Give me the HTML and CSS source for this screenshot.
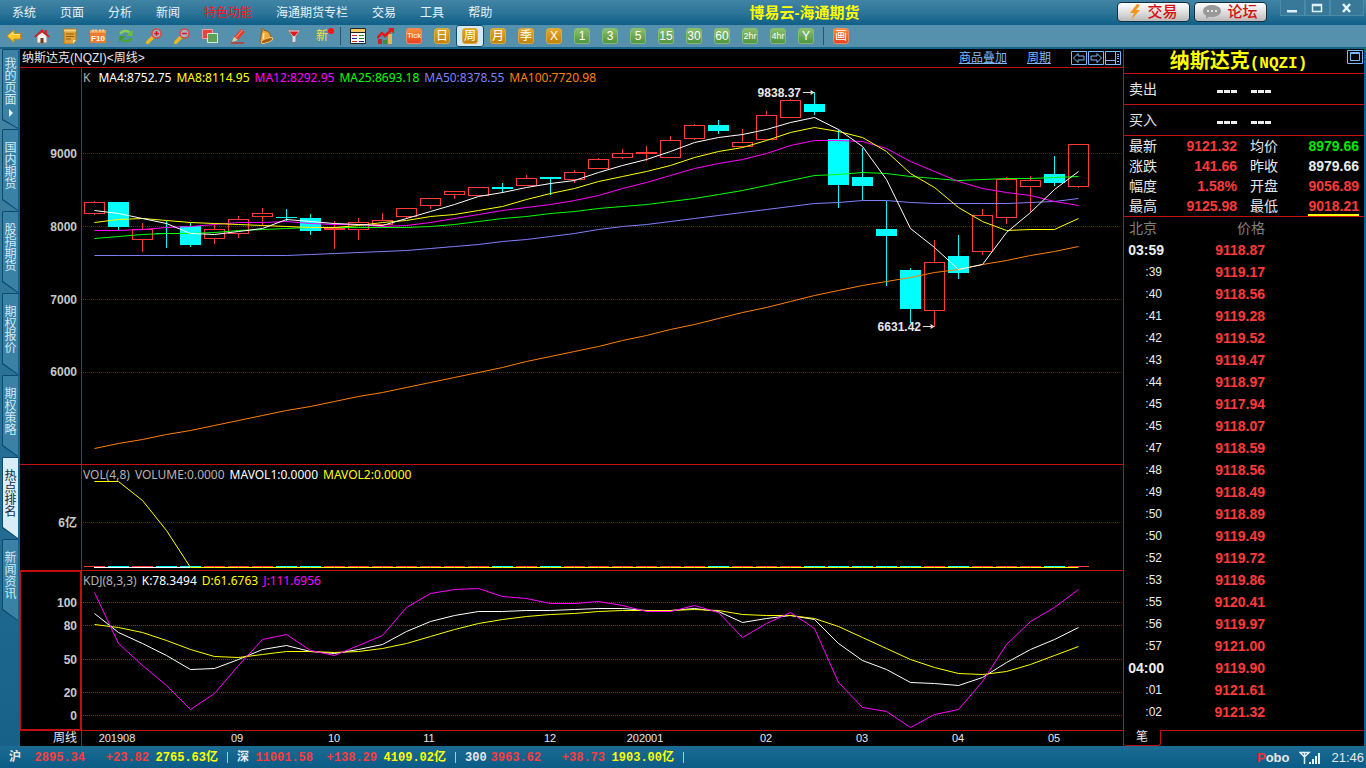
FILE: index.html
```html
<!DOCTYPE html>
<html lang="zh-CN">
<head>
<meta charset="utf-8">
<title>博易云-海通期货</title>
<link rel="stylesheet" href="styles.css">
</head>
<body>
<div class="app">
  <header class="titlebar">
    <nav class="menu">
      <a href="#">系统</a><a href="#">页面</a><a href="#">分析</a><a href="#">新闻</a><a href="#" class="hot">特色功能</a><a href="#">海通期货专栏</a><a href="#">交易</a><a href="#">工具</a><a href="#">帮助</a>
    </nav>
    <h1 class="app-title">博易云-海通期货</h1>
    <div class="quick">
      <button class="pill"><svg width="12" height="16" viewBox="0 0 12 16"><path d="M8 0 1 9h4L2 16l9-10H7l4-5z" fill="#f7941d"/></svg>交易</button>
      <button class="pill"><svg width="18" height="14" viewBox="0 0 18 14"><path d="M9 0c5 0 9 2.400 9 6s-4 6-9 6c-1 0-2 0-3-.3L3 14v-3.500C1 9.500 0 8 0 6c0-3.600 4-6 9-6z" fill="#999"/><circle cx="5" cy="6" r="1" fill="#fff"/><circle cx="9" cy="6" r="1" fill="#fff"/><circle cx="13" cy="6" r="1" fill="#fff"/></svg>论坛</button>
    </div>
    <div class="window-controls">
      <button aria-label="最小化"><svg width="12" height="10" viewBox="0 0 12 10"><path d="M1 7h10v2.500H1z" fill="#dff1fa"/></svg></button>
      <button aria-label="最大化"><svg width="12" height="10" viewBox="0 0 12 10"><path d="M1.500 1.500h9v7h-9zM1.500 2.500h9" fill="none" stroke="#dff1fa" stroke-width="1.500"/></svg></button>
      <button aria-label="关闭" class="close"><svg width="12" height="10" viewBox="0 0 12 10"><path d="M2 1l7 8M9 1 2 9" fill="none" stroke="#dff1fa" stroke-width="2.500"/></svg></button>
    </div>
  </header>

  <div class="toolbar">
    <button aria-label="后退"><svg width="16" height="16" viewBox="0 0 16 16"><path d="M1 8 8 2v3.500h6.500v5.500H8v3.500z" fill="#ffc72c" stroke="#c98d12"/><path d="M3.500 7.500 7 4.500v2h6.500" fill="none" stroke="#ffe88c"/></svg></button>
    <button aria-label="首页"><svg width="16" height="16" viewBox="0 0 16 16"><path d="M3 8v7h10V8L8 3z" fill="#eee" stroke="#888"/><path d="M11 2h2v4h-2z" fill="#b33"/><path d="M0 8.500 8 1l8 7.500-1.500 1L8 4.500 1.500 9.500z" fill="#c9262b"/><path d="M6.500 10h3v5h-3z" fill="#6b3a1c"/></svg></button>
    <button aria-label="资讯"><svg width="16" height="16" viewBox="0 0 16 16"><path d="M2 1h12v11l-3 4H2z" fill="#e3a33a" stroke="#b57718"/><path d="M2 1.500h12v2H2z" fill="#f7d27c"/><path d="M4 6h8M4 8.500h8M4 11h5" stroke="#8f5d12"/><path d="M11 16v-4h3z" fill="#ffe4a0"/></svg></button>
    <button aria-label="F10"><svg width="18" height="16" viewBox="0 0 18 16"><rect x="1" y="2" width="16" height="13" rx="1" fill="#ee7a2c"/><path d="M1 2h16v3H1z" fill="#f5a14d"/><path d="M4 1v3M7 1v3M11 1v3M14 1v3" stroke="#f3e3cf"/><text x="9" y="13" class="f10">F10</text></svg></button>
    <button aria-label="刷新"><svg width="16" height="16" viewBox="0 0 16 16"><path d="M2.500 6C4 2.500 9 2 11.500 4.500" fill="none" stroke="#8ad04a" stroke-width="2.500"/><path d="M14.500 2v6H8.500z" fill="#6cbf35"/><path d="M13.500 10C12 13.500 7 14 4.500 11.500" fill="none" stroke="#4aa62f" stroke-width="2.500"/><path d="M1.500 14V8h6z" fill="#3f9a2b"/></svg></button>
    <button aria-label="放大"><svg width="16" height="16" viewBox="0 0 16 16"><path d="m1.500 14.500 5-5" stroke="#f0b51c" stroke-width="3.500" stroke-linecap="round"/><circle cx="10.500" cy="5.500" r="4.500" fill="#eed3d3" fill-opacity=".5" stroke="#dc4a3c" stroke-width="1.500"/><path d="M8 5.500h5M10.500 3v5" stroke="#cf1e1e" stroke-width="1.500"/></svg></button>
    <button aria-label="缩小"><svg width="16" height="16" viewBox="0 0 16 16"><path d="m1.500 14.500 5-5" stroke="#f0b51c" stroke-width="3.500" stroke-linecap="round"/><circle cx="10.500" cy="5.500" r="4.500" fill="#eed3d3" fill-opacity=".5" stroke="#dc4a3c" stroke-width="1.500"/><path d="M8 5.500h5" stroke="#cf1e1e" stroke-width="1.500"/></svg></button>
    <button aria-label="叠加"><svg width="17" height="16" viewBox="0 0 17 16"><path d="M.5 1.500h10v9H.5z" fill="#e0473f" stroke="#f2a09b"/><path d="M5.500 5.500h10v9h-10z" fill="#5da257" stroke="#d8ead5"/></svg></button>
    <button aria-label="画笔"><svg width="16" height="16" viewBox="0 0 16 16"><path d="M1 15h13" stroke="#c43628" stroke-width="1.500"/><path d="M11 1l4 3-7 8-4-3z" fill="#e5402f"/><path d="M12.500 2 5.500 10" stroke="#ff9a85"/><path d="M4 9l4 3-6 2z" fill="#f3cf8f"/></svg></button>
    <button aria-label="预警"><svg width="16" height="16" viewBox="0 0 16 16"><path d="M3 1.500C4.500 0 6 1 6 2.500c4 0 6.500 3 6.500 6l2.500 2L3 15l-1-2.500C4 9 2 5.500 4.500 3z" fill="#eba93a" stroke="#8f5410"/><ellipse cx="9" cy="12.500" rx="6" ry="2" transform="rotate(-20 9 12.500)" fill="#a65c17" stroke="#f8cf73"/><path d="M6 5c-1 2 0 4-1 6" stroke="#fdeab5" stroke-width="1.500" fill="none"/></svg></button>
    <button aria-label="筛选"><svg width="16" height="16" viewBox="0 0 16 16"><path d="M1.500 2h13L10 8.500V14l-4 1V8.500z" fill="#d7dfe4" stroke="#6f7d86"/><path d="M3.500 3.500h9L9 8H7z" fill="#e11b1b"/></svg></button>
    <button class="new">新<i></i></button>
    <span class="sep"></span>
    <button aria-label="报价"><svg width="16" height="16" viewBox="0 0 16 16"><path d="M.5.500h15v15H.5z" fill="#fff" stroke="#222"/><path d="M1 1h14v3H1z" fill="#f3c766"/><path d="M1 4.500h14" stroke="#222"/><path d="M2 7.500h5M2 13.500h5" stroke="#d22"/><path d="M9 7.500h5M9 10.500h5" stroke="#282"/><path d="M2 10.500h5M9 13.500h5" stroke="#228"/></svg></button>
    <button aria-label="走势"><svg width="18" height="16" viewBox="0 0 18 16"><path d="M1 11h4v5H1z" fill="#c22"/><path d="M6 12h4v4H6z" fill="#3c8c3a"/><path d="M11 6h4v10h-4z" fill="#e4b75a"/><path d="m0 10 5-5 3 3 7-7" fill="none" stroke="#e51717" stroke-width="2.500"/><path d="M11 0h6v6z" fill="#e51717"/></svg></button>
    <button><b class="tile red tick">Tick</b></button>
    <button><b class="tile gold">日</b></button>
    <button class="selected"><b class="tile gold">周</b></button>
    <button><b class="tile gold">月</b></button>
    <button><b class="tile gold">季</b></button>
    <button><b class="tile gold">X</b></button>
    <button><b class="tile">1</b></button>
    <button><b class="tile">3</b></button>
    <button><b class="tile">5</b></button>
    <button><b class="tile">15</b></button>
    <button><b class="tile">30</b></button>
    <button><b class="tile">60</b></button>
    <button><b class="tile small">2hr</b></button>
    <button><b class="tile small">4hr</b></button>
    <button><b class="tile">Y</b></button>
    <span class="sep narrow"></span>
    <button><b class="tile red">画</b></button>
  </div>

  <div class="workspace">
    <nav class="side-tabs">
      <button class="side-tab first"><span>我的页面</span><i class="more"></i></button>
      <button class="side-tab"><span>国内期货</span></button>
      <button class="side-tab"><span>股指期货</span></button>
      <button class="side-tab"><span>期权报价</span></button>
      <button class="side-tab"><span>期权策略</span></button>
      <button class="side-tab active"><span>热点排名</span></button>
      <button class="side-tab"><span>新闻资讯</span></button>
    </nav>

    <main class="charts">
      <div class="chart-head">
        <span class="symbol">纳斯达克(NQZI)&lt;周线&gt;</span>
        <a href="#">商品叠加</a>
        <a href="#">周期</a>
        <div class="head-icons">
          <button aria-label="左移"><svg width="16" height="14" viewBox="0 0 16 14"><path d="M.5.500h15v13H.5zM2.500 7 7 2.500v2.500h6v4H7v2.500z"/></svg></button>
          <button aria-label="右移"><svg width="16" height="14" viewBox="0 0 16 14"><path d="M.5.500h15v13H.5zM13.500 7 9 2.500v2.500H3v4h6v2.500z"/></svg></button>
          <button aria-label="布局"><svg width="16" height="14" viewBox="0 0 16 14"><path d="M.5.500h15v13H.5zM.5 9.500h10M10.500.500v13M12 3.500h2M12 5.500h2M12 7.500h2M12 10.500h2"/></svg></button>
        </div>
      </div>

      <section class="panel price">
        <div class="axis" data-panel="price"></div>
        <div class="plot" data-panel="price">
          <svg viewBox="82 68 1041 396" preserveAspectRatio="none"></svg>
          <div class="legend"><span class="key">K</span><span class="c-white">MA4:8752.75</span><span class="c-yellow">MA8:8114.95</span><span class="c-magenta">MA12:8292.95</span><span class="c-green">MA25:8693.18</span><span class="c-violet">MA50:8378.55</span><span class="c-orange">MA100:7720.98</span></div>
        </div>
      </section>

      <section class="panel volume">
        <div class="axis" data-panel="volume"></div>
        <div class="plot" data-panel="volume">
          <svg viewBox="82 465 1041 105" preserveAspectRatio="none"></svg>
          <div class="legend"><span>VOL(4,8)</span><span>VOLUME:0.0000</span><span class="c-white">MAVOL1:0.0000</span><span class="c-yellow">MAVOL2:0.0000</span></div>
        </div>
      </section>

      <section class="panel kdj">
        <div class="axis" data-panel="kdj"></div>
        <div class="plot" data-panel="kdj">
          <svg viewBox="82 571 1041 159" preserveAspectRatio="none"></svg>
          <div class="legend"><span>KDJ(8,3,3)</span><span class="c-white">K:78.3494</span><span class="c-yellow">D:61.6763</span><span class="c-magenta">J:111.6956</span></div>
        </div>
      </section>

      <div class="time-axis">
        <div class="period">周线</div>
        <div class="dates"></div>
      </div>
    </main>

    <aside class="quote">
      <div class="quote-head">
        <h2>纳斯达克<span>(NQZI)</span></h2>
        <button aria-label="还原"><svg width="16" height="14" viewBox="0 0 16 14"><path d="M.5.500h15v13H.5zM3.500 2.500h9v8h-9zM3.500 3.500h9"/></svg></button>
      </div>
      <div class="depth"><span>卖出</span><b><i></i><i></i><i></i></b><b><i></i><i></i><i></i></b></div>
      <div class="depth"><span>买入</span><b><i></i><i></i><i></i></b><b><i></i><i></i><i></i></b></div>
      <table class="stats">
        <tr><th>最新</th><td>9121.32</td><th>均价</th><td class="c-up">8979.66</td></tr>
        <tr><th>涨跌</th><td>141.66</td><th>昨收</th><td class="c-plain">8979.66</td></tr>
        <tr><th>幅度</th><td>1.58%</td><th>开盘</th><td>9056.89</td></tr>
        <tr><th>最高</th><td>9125.98</td><th>最低</th><td><span class="flash">9018.21</span></td></tr>
      </table>
      <table class="ticks">
        <thead><tr><th>北京</th><th>价格</th><th></th></tr></thead>
        <tbody></tbody>
      </table>
      <div class="quote-foot"><button>笔</button><span></span></div>
    </aside>
  </div>

  <footer class="status">
    <div class="index"><span>沪</span><span class="down">2895.34</span><span class="down">+23.82</span><span class="turnover">2765.63亿</span></div>
    <div class="index"><span>深</span><span class="down">11001.58</span><span class="down">+138.29</span><span class="turnover">4109.02亿</span></div>
    <div class="index"><span>300</span><span class="down">3963.62</span><span class="down">+38.73</span><span class="turnover">1903.00亿</span></div>
    <div class="status-right">
      <b class="pobo"><span>P</span>obo</b>
      <svg width="22" height="14" viewBox="0 0 22 14"><path d="M1 1.500h9L5.500 6zM5.500 1.500V13" fill="none" stroke="#e4f1f8" stroke-width="1.500"/><path d="M10 11h2v2h-2zM13 8h2v5h-2zM16 5h2v8h-2zM19 2h2v11h-2z" fill="#e4f1f8"/></svg>
      <time>21:46</time>
    </div>
  </footer>
</div>
<script src="chart.js"></script>
</body>
</html>
```
FILE: styles.css
```css
* { box-sizing: border-box; }
body {
  margin: 0;
  background: #000;
  color: #e8e8e8;
  font: 12px/16px "Liberation Sans", "Noto Sans CJK SC", sans-serif;
}
button {
  border: 0;
  margin: 0;
  padding: 0;
  background: none;
  color: inherit;
  font: inherit;
}
a { color: inherit; text-decoration: none; }
svg { display: block; }

.app { display: flex; flex-direction: column; height: 100vh; min-height: 760px; min-width: 1200px; }

/* title bar */
.titlebar {
  display: flex;
  flex: 0 0 25px;
  align-items: center;
  background: linear-gradient(#4184a5, #2e7598 50%, #0e5f89);
}
.menu { display: flex; gap: 24px; padding-left: 12px; color: #e6f2f8; }
.menu .hot { color: #ff1010; }
.app-title { margin: 0 auto; color: #ff0; font-size: 15px; line-height: 20px; font-weight: bold; }
.quick { display: flex; align-self: flex-start; gap: 4px; padding-top: 2px; }
.pill {
  display: flex;
  align-items: center;
  justify-content: center;
  gap: 6px;
  width: 73px;
  height: 20px;
  border: 1px solid #12303f;
  border-radius: 4px;
  background: linear-gradient(#fff, #d9d9d9 60%, #b9b9b9);
  color: #d80f0f;
  font-size: 15px;
  line-height: 18px;
  font-weight: 500;
}
.window-controls { display: flex; align-self: flex-start; margin: 0 2px 0 13px; }
.window-controls button {
  display: grid;
  place-items: center;
  width: 25px;
  height: 16px;
  border: 1px solid #4a8baa;
  border-top: 0;
  background: #38799a;
}
.window-controls .close { width: 34px; }

/* toolbar */
.toolbar {
  display: flex;
  flex: 0 0 24px;
  background: #5590ad;
  border-bottom: 2px solid #166289;
}
.toolbar button { display: grid; place-items: center; width: 28px; height: 22px; }
.toolbar .selected { background: #d3e9f5; border: 1px solid #10486a; border-radius: 3px; }
.sep { display: flex; justify-content: center; width: 8px; padding: 2px 0; }
.sep::before { content: ""; border-left: 1px solid #2d5468; }
.sep.narrow { width: 7px; }
.tile {
  display: grid;
  place-items: center;
  width: 16px;
  height: 16px;
  border: 1px solid #85bd6d;
  border-radius: 3px;
  background: linear-gradient(#8abf6c, #4f9442);
  color: #fff;
  font-size: 12px;
  line-height: 14px;
  font-weight: 400;
}
.tile.gold { background: linear-gradient(#e2a92a, #c18208); border-color: #d9a83f; }
.tile.red { background: linear-gradient(#fb8f38, #ea3f22); border-color: #f08a5a; }
.tile.small { font-size: 9px; }
.tile.tick { font-size: 8px; }
.f10 { font: bold 8px "Liberation Sans", sans-serif; fill: #fff; text-anchor: middle; }
.new { position: relative; color: #ffe13a; }
.new i { position: absolute; top: 3px; right: 2px; width: 6px; height: 6px; border-radius: 50%; background: #f11; }

/* workspace */
.workspace { display: flex; flex: 1; min-height: 0; border-right: 2px solid #136189; }
.side-tabs {
  display: flex;
  flex: 0 0 20px;
  flex-direction: column;
  padding-left: 2px;
  border-right: 2px solid #166289;
  background: linear-gradient(#4a87a5, #2a7296 45%, #176189);
}
.side-tab {
  position: relative;
  display: flex;
  flex-direction: column;
  align-items: center;
  width: 16px;
  height: 82px;
  padding: 13px 0 0 1px;
  background: #0b4a6d;
  clip-path: polygon(0 1px, 1px 0, 100% 0, 100% 100%, 0 71px);
  color: #d3ebf6;
  line-height: 12px;
}
.side-tab::before {
  content: "";
  position: absolute;
  inset: 1px 0 1px 1px;
  background: #3a81a6;
  clip-path: polygon(0 0, 100% 0, 100% 100%, 0 69px);
}
.side-tab span { position: relative; width: 12px; }
.side-tab.first { height: 80px; padding-top: 9px; }
.side-tab .more {
  position: relative;
  margin-top: 3px;
  border: 4px solid transparent;
  border-left-color: #e4f4fb;
  border-right-width: 0;
}
.side-tab.active { color: #102e40; }
.side-tab.active::before { background: #d9edf8; }

/* chart column */
.charts { display: flex; flex: 1; flex-direction: column; min-width: 0; }
.chart-head {
  display: flex;
  flex: 0 0 19px;
  align-items: center;
  gap: 20px;
  padding: 0 2px 0 2px;
  border-bottom: 1px solid #c01010;
}
.chart-head .symbol { flex: 1; }
.chart-head a { color: #7db8ff; text-decoration: underline; }
.head-icons { display: flex; gap: 1px; }
.head-icons path, .quote-head path { fill: none; stroke: #7db8ff; }
.panel { display: flex; min-height: 0; border-bottom: 1px solid #c01010; }
.panel.price { flex: 397 397 397px; }
.panel.volume { flex: 106 106 106px; }
.panel.kdj { flex: 160 160 160px; }
.axis {
  position: relative;
  flex: 0 0 62px;
  border-right: 1px solid #c01010;
  color: #c8c8c8;
  font-weight: bold;
}
.kdj .axis { box-shadow: inset 1px 0 #c01010, inset 0 1px #c01010, inset -1px 0 #c01010, inset 0 -1px #c01010; }
.axis span { position: absolute; right: 4px; line-height: 16px; margin-top: -8px; }
.plot { position: relative; flex: 1; min-width: 0; }
.plot svg { position: absolute; inset: 0; width: 100%; height: 100%; }
.plot svg line, .plot svg rect { shape-rendering: crispEdges; }
.legend {
  position: relative;
  display: flex;
  gap: 5px;
  padding: 2px 0 0 1px;
  color: #b4b4b4;
  font-family: "Noto Sans", sans-serif;
}
.legend .key { margin-right: 3px; }
.note {
  position: absolute;
  display: flex;
  align-items: center;
  gap: 2px;
  margin-top: -8px;
  transform: translateX(-100%);
  color: #e8e8e8;
  font-weight: bold;
}
.plot .note svg { position: static; width: 12px; height: 7px; }
.time-axis { display: flex; flex: 0 0 15px; line-height: 15px; }
.period { flex: 0 0 62px; padding-right: 4px; border-right: 1px solid #c01010; text-align: right; }
.dates { position: relative; flex: 1; font-size: 11px; }
.dates span { position: absolute; transform: translateX(-50%); }
.c-white { color: #fff; }
.c-yellow { color: #ff0; }
.c-magenta { color: #f0f; }
.c-green { color: #0f0; }
.c-violet { color: #8080ff; }
.c-orange { color: #ff8000; }

/* quote column */
.quote { display: flex; flex: 0 0 241px; flex-direction: column; border-left: 1px solid #c01010; font-size: 14px; }
.quote-head { display: flex; flex: 0 0 25px; min-height: 0; height: 25px; border-bottom: 1px solid #c01010; padding-right: 1px; }
.quote-head h2 { flex: 1; margin: 0; padding-left: 6px; color: #ff0; font-size: 20px; line-height: 24px; text-align: center; }
.quote-head h2 span { font-family: "Liberation Mono", monospace; font-size: 16px; line-height: 16px; }
.quote-head button { align-self: flex-start; padding-top: 1px; }
.depth { display: flex; flex: 0 0 31px; align-items: center; gap: 14px; padding-left: 5px; border-bottom: 1px solid #c01010; }
.depth span { width: 74px; }
.depth b { display: flex; gap: 1px; padding-top: 4px; }
.depth b i { width: 6px; height: 3px; background: #eee; }
.stats, .ticks { width: 100%; border-collapse: collapse; table-layout: fixed; }
.stats { border-bottom: 1px solid #c01010; }
.stats th, .stats td { height: 20px; padding: 0; line-height: 20px; }
.stats th { width: 40px; padding-left: 5px; text-align: left; font-weight: 400; }
.stats td:nth-child(2) { width: 73px; }
.stats th:nth-child(3) { width: 57px; padding-left: 13px; }
.stats td { color: #ff3a3a; font-weight: bold; text-align: right; }
.stats td:last-child { padding-right: 5px; }
.stats .c-up { color: #00e800; }
.stats .c-plain { color: #eee; }
.flash { box-shadow: 0 2px #ff0; }
.ticks th { height: 22px; padding: 0; color: #808080; font-weight: 400; text-align: right; }
.ticks th:first-child { width: 40px; padding-left: 5px; text-align: left; }
.ticks th:nth-child(2) { width: 101px; }
.ticks td { height: 22px; padding: 0; text-align: right; color: #ff3a3a; font-weight: bold; line-height: 22px; }
.ticks td:first-child { padding-right: 2px; color: #eee; font-size: 12px; font-weight: 400; }
.ticks .minute td:first-child { padding-right: 0; font-size: 14px; font-weight: bold; }
.quote-foot { display: flex; flex: 0 0 16px; margin-top: auto; }
.quote-foot button {
  width: 37px;
  border: 1px solid #c01010;
  border-width: 0 1px 1px 0;
  border-radius: 0 0 3px 3px;
  font-size: 12px;
  line-height: 15px;
}
.quote-foot span { flex: 1; border-top: 1px solid #c01010; }

/* status bar */
.status {
  display: flex;
  flex: 0 0 22px;
  align-items: center;
  padding: 2px 2px 0 9px;
  background: linear-gradient(#1b6b93, #0b5c86);
  font-weight: bold;
}
.index { display: grid; grid-template-columns: 18px 58px 64px 69px 10px; width: 228px; text-align: right; font-family: "Liberation Mono", "Noto Sans CJK SC", monospace; }
.index::after { content: ""; height: 11px; margin-top: 2px; border-right: 1px solid #9ccbe2; }
.index span:first-child { text-align: left; }
.down { color: #ff3a3a; }
.turnover { color: #ff0; }
.status-right { display: flex; align-items: center; gap: 10px; margin-left: auto; font-weight: 400; font-size: 13px; }
.pobo span { color: #ff2b2b; }
```
FILE: chart.js
```js
const NS = 'http://www.w3.org/2000/svg';
const UP = '#ff3a3a', DOWN = '#00ffff';
const X0 = 94, STEP = 24, LEFT = 82, WIDTH = 1041;

// direction, high, body top, body bottom, low
const candles = [
  ['u',201,202,213,214],['d',202,202,227,230],['u',223,229,239,251],['d',221,233,234,248],['d',223,226,245,247],
  ['u',224,229,238,243],['u',216,219,233,237],['u',208,213,216,225],['d',209,217,218,221],['d',214,218,231,235],
  ['u',221,228,229,248],['u',218,222,229,239],['u',213,220,224,226],['u',208,208,216,218],['u',198,198,205,208],
  ['u',191,191,194,198],['u',187,187,195,195],['d',183,187,189,193],['u',175,178,185,185],['d',177,177,179,195],
  ['u',170,172,179,182],['u',158,159,168,168],['u',149,153,157,158],['u',146,152,153,160],['u',136,140,157,157],
  ['u',124,125,138,139],['d',120,125,131,134],['u',129,142,146,146],['u',111,115,139,139],['u',99,100,117,117],
  ['d',92,104,112,115],['d',130,139,185,208],['d',148,177,186,200],['d',201,229,236,286],['d',268,270,309,323],
  ['u',240,262,310,326],['d',235,256,273,279],['u',209,215,251,254],['u',177,179,217,223],['u',176,180,186,211],
  ['d',156,174,183,186],['u',144,144,186,187]
];

const averages = [
  ['#8080ff',[255,255,255,255,255,255,255,255,255,254,253,252,251,250,248,246,244,241,239,236,233,229,226,224,221,218,215,212,209,206,203,202,200,200,202,203,203,203,203,202,201,198]],
  ['#00ff00',[238,236,234,233,233,232,230,229,228,227,227,227,227,227,226,224,221,218,216,213,211,208,206,204,201,198,194,190,185,180,175,174,172,173,176,178,180,179,178,178,177,176]],
  ['#ff00ff',[230,230,229,227,226,224,222,222,221,223,224,224,226,225,222,218,214,210,207,204,200,195,188,182,175,168,163,159,153,145,140,140,141,148,161,171,181,188,192,195,201,205]],
  ['#ffff00',[222,219,218,220,222,223,224,225,226,227,227,225,222,220,216,214,210,206,199,193,188,181,176,171,165,157,151,147,140,132,127,131,137,151,173,187,207,221,230,229,229,218]],
  ['#ff8000',[448,443,439,434,430,425,420,415,410,406,401,396,392,387,382,377,372,367,361,356,351,346,340,335,329,324,318,312,307,301,295,290,285,281,277,272,269,264,260,255,251,246]],
  ['#ffffff',[210,213,218,223,233,234,231,228,219,221,223,224,225,218,211,204,196,192,187,183,180,172,165,159,151,142,137,134,129,122,117,129,146,179,228,247,269,264,232,212,189,171]]
];

const kdj = [
  ['#ffffff',[613,632,643,655,669,668,659,649,645,651,653,649,644,631,621,615,611,611,610,610,609,608,608,610,610,608,611,622,618,615,619,643,660,669,682,683,685,677,662,649,639,627]],
  ['#ffff00',[624,627,632,640,649,656,657,654,651,651,652,651,648,643,636,629,623,619,616,614,613,611,610,610,610,609,610,614,615,615,618,626,637,648,659,667,673,674,671,664,655,646]],
  ['#ff00ff',[592,643,665,685,709,693,665,639,634,650,655,645,635,607,593,589,588,596,598,603,603,601,605,611,611,605,612,637,623,612,628,682,707,711,727,714,709,681,644,621,607,589]]
];

const panels = {
  price: { top: 68, height: 396, grid: '#8a0c0c', levels: [[153,'9000'],[226,'8000'],[299,'7000'],[372,'6000']] },
  volume: { top: 465, height: 105, grid: '#8a0c0c', levels: [[522,'6亿']] },
  kdj: { top: 571, height: 159, grid: '#b81414', levels: [[602,'100'],[625,'80'],[659,'50'],[692,'20'],[715,'0']] }
};

const surface = name => document.querySelector(`.plot[data-panel=${name}] svg`);

function add(parent, tag, attrs) {
  const el = document.createElementNS(NS, tag);
  for (const key in attrs) el.setAttribute(key, attrs[key]);
  parent.appendChild(el);
}
const line = (svg, x1, y1, x2, y2, stroke, extra) => add(svg, 'line', { x1, y1, x2, y2, stroke, ...extra });
const curve = (svg, ys, stroke) => add(svg, 'polyline', {
  points: ys.map((y, i) => `${X0 + STEP * i + 0.5},${y + 0.5}`).join(' '), fill: 'none', stroke
});

for (const name in panels) {
  const p = panels[name];
  const axis = document.querySelector(`.axis[data-panel=${name}]`);
  for (const [y, label] of p.levels) {
    line(surface(name), 83, y + 0.5, 1123, y + 0.5, p.grid, { 'stroke-dasharray': '1 1' });
    const tag = document.createElement('span');
    tag.textContent = label;
    tag.style.top = `${(y + 0.5 - p.top) / p.height * 100}%`;
    axis.appendChild(tag);
  }
}

candles.forEach(([dir, high, top, bottom, low], i) => {
  const svg = surface('price'), x = X0 + STEP * i, c = x + 0.5;
  if (dir === 'd') {
    line(svg, c, high, c, low, DOWN);
    add(svg, 'rect', { x: x - 10, y: top, width: 21, height: bottom - top, fill: DOWN });
  } else {
    if (high < top) line(svg, c, high, c, top, UP);
    if (low > bottom) line(svg, c, bottom, c, low + 1, UP);
    add(svg, 'rect', { x: x - 9.5, y: top + 0.5, width: 20, height: bottom - top, fill: 'none', stroke: UP });
  }
  line(surface('volume'), x - 10, 566.5, x + 11, 566.5, dir === 'd' ? DOWN : UP);
});

averages.forEach(([color, ys]) => curve(surface('price'), ys, color));
kdj.forEach(([color, ys]) => curve(surface('kdj'), ys, color));
curve(surface('volume'), [481, 481, 500, 530].concat(Array(38).fill(567)), '#ffff00');
line(surface('volume'), 94, 567.5, 190, 567.5, '#ffffff');

[[815, 92, '9838.37'], [935, 326, '6631.42']].forEach(([x, y, text]) => {
  const note = document.createElement('div');
  note.className = 'note';
  note.style.left = `${(x - LEFT) / WIDTH * 100}%`;
  note.style.top = `${(y + 0.5 - panels.price.top) / panels.price.height * 100}%`;
  note.innerHTML = `${text}<svg viewBox="0 0 12 7"><path d="M0 3.500h10" stroke="#ddd"/><path d="M8 1l4 2.500L8 6z" fill="#ddd"/></svg>`;
  document.querySelector('.plot[data-panel=price]').appendChild(note);
});

[[117,'201908'],[237,'09'],[334,'10'],[429,'11'],[550,'12'],[645,'202001'],[766,'02'],[862,'03'],[958,'04'],[1054,'05']].forEach(([x, text]) => {
  const tag = document.createElement('span');
  tag.textContent = text;
  tag.style.left = `${(x - LEFT) / WIDTH * 100}%`;
  document.querySelector('.dates').appendChild(tag);
});

const ticks = [['03:59','9118.87'],[':39','9119.17'],[':40','9118.56'],[':41','9119.28'],[':42','9119.52'],[':43','9119.47'],
  [':44','9118.97'],[':45','9117.94'],[':45','9118.07'],[':47','9118.59'],[':48','9118.56'],[':49','9118.49'],[':50','9118.89'],
  [':50','9119.49'],[':52','9119.72'],[':53','9119.86'],[':55','9120.41'],[':56','9119.97'],[':57','9121.00'],['04:00','9119.90'],
  [':01','9121.61'],[':02','9121.32']];
document.querySelector('.ticks tbody').innerHTML = ticks.map(([time, price]) =>
  `<tr${time.length > 3 ? ' class="minute"' : ''}><td>${time}</td><td>${price}</td><td></td></tr>`).join('');
```
